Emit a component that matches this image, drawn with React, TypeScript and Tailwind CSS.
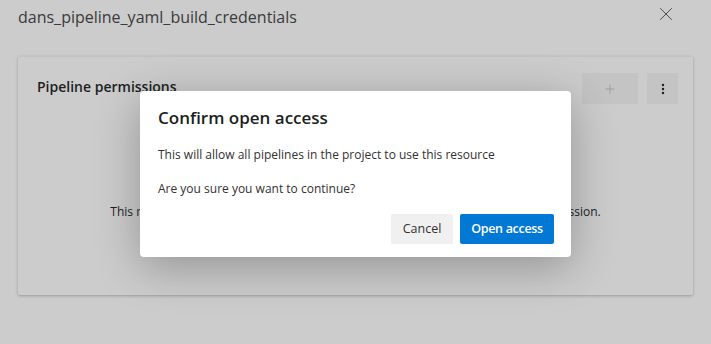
import { X, Plus, MoreVertical } from 'lucide-react'

const font = { fontFamily: '"Segoe UI", "Open Sans", "Noto Sans", sans-serif' }

function PermissionsCard() {
  return (
    <div className="mx-[18px] mt-[28px] h-[239px] rounded-[2px] border-t border-[#c2c2c2] shadow-[0_1px_3px_rgba(0,0,0,0.25)] flex flex-col">
      {/* Header */}
      <div className="flex items-start pl-[19px] pr-[15px] pt-[16px]">
        <h3 className="text-[14px] font-semibold text-[#201f1e] mt-[3px] flex-1">Pipeline permissions</h3>
        <button className="w-[56px] h-[31px] bg-[#c4c4c4] flex items-center justify-center text-[#9a8f93]">
          <Plus size={14} strokeWidth={1.2} />
        </button>
        <button className="w-[31px] h-[31px] ml-[9px] bg-[#c4c4c4] flex items-center justify-center text-[#222]">
          <MoreVertical size={14} strokeWidth={2.2} />
        </button>
      </div>

      {/* Empty state */}
      <p className="mt-[99px] text-center text-[12px] text-[#201f1e]">
        This resource is not restricted. Add pipelines to restrict it or set open access permission.
      </p>
    </div>
  )
}

function ConfirmDialog() {
  return (
    <div className="absolute left-[140px] top-[91px] w-[431px] h-[166px] bg-white rounded-[4px] shadow-[0_10px_45px_rgba(0,0,0,0.28)] px-[18px] pt-[15px]">
      <h2 className="text-[17px] font-semibold text-[#201f1e] leading-[24px]">Confirm open access</h2>
      <p className="mt-[17px] text-[12px] text-[#323130] leading-[16px]">This will allow all pipelines in the project to use this resource</p>
      <p className="mt-[18px] text-[12px] text-[#323130] leading-[16px]">Are you sure you want to continue?</p>
      <div className="flex justify-end gap-[7px] mt-[17px] mr-[-1px]">
        <button className="w-[62px] h-[30px] bg-[#f0f0f0] rounded-[2px] text-[12.5px] text-[#323130]">Cancel</button>
        <button className="w-[94px] h-[30px] bg-[#0078d4] rounded-[2px] text-[12.5px] font-semibold tracking-[-0.3px] text-white">Open access</button>
      </div>
    </div>
  )
}

export default function App() {
  return (
    <div className="relative w-[711px] h-[344px] overflow-hidden bg-[#cccccc]" style={font}>
      {/* Panel header */}
      <div className="flex items-start pl-[18px] pr-[34px] pt-[6px]">
        <h1 className="flex-1 text-[16px] text-[#3a3a3a] leading-[22px]">dans_pipeline_yaml_build_credentials</h1>
        <button className="mt-[-3px] text-[#333]">
          <X size={22} strokeWidth={0.9} />
        </button>
      </div>

      <PermissionsCard />

      <ConfirmDialog />
    </div>
  )
}
